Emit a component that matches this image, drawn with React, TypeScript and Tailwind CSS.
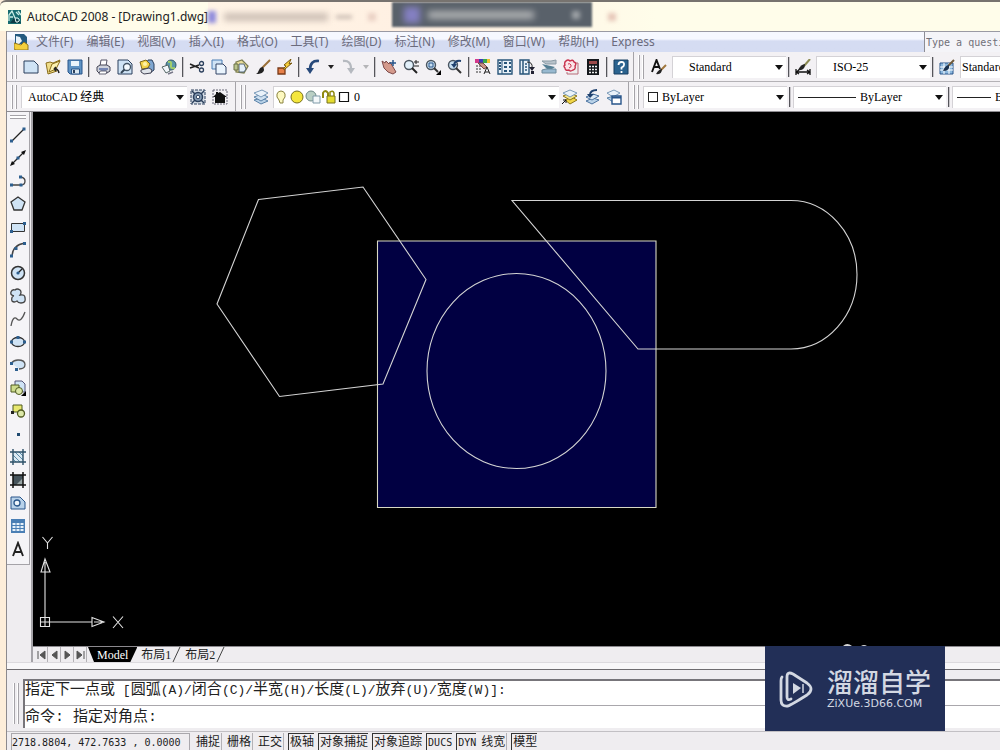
import { useState } from 'react';
import type { ReactNode } from 'react';

const ink = '#2b3f5c';
const blue = '#4a7fb5';
const pale = '#cfe3f5';

// 16x16 toolbar drawings
const icons: Record<string, ReactNode> = {
  new: <path d="M1 2h10l4 4v8H1z" fill={pale} stroke={ink} />,
  open: (
    <>
      <path d="M1 4l4-1 3 1 7-3-4 7 1 4-9 3z" fill="#f0dc88" stroke="#8a6d1a" />
      <path d="M4 13l3-8 8-3-4 8z" fill="#fbf0b0" stroke="#8a6d1a" />
      <path d="M14 14q-1-5-5-4m0 0l2-2m-2 2l2 2" fill="none" stroke="#222" strokeWidth="1.500" />
    </>
  ),
  save: (
    <>
      <path d="M1 1h14v14H3l-2-2z" fill="#5f93c4" stroke="#28558a" />
      <path d="M4 2h8v5H4z" fill="#eaf4fc" />
      <path d="M4.500 10h8v5h-8z" fill="#dbe8f2" stroke="#28558a" />
      <path d="M6 11h2v3H6z" fill={ink} />
    </>
  ),
  print: (
    <>
      <path d="M5 7l1-6h6l-1 6" fill="#fff" stroke="#556" />
      <path d="M2 8l3-2h7l3 2v4l-3 2H4l-2-2z" fill="#cfd3dc" stroke="#445" />
      <path d="M4 10h9M6 12h5" stroke="#5a6fa8" strokeWidth="1.500" />
      <path d="M5 12l-1 3h7l1-3z" fill="#fff" stroke="#667" />
    </>
  ),
  preview: (
    <>
      <path d="M1 1h10l4 4v10H1z" fill={pale} stroke={ink} />
      <circle cx="10" cy="8" r="3.500" fill="#f4faff" stroke="#456" strokeWidth="1.300" />
      <path d="M7.500 10.500L4 14" stroke="#345" strokeWidth="2" />
    </>
  ),
  publish: (
    <>
      <path d="M9 1h4l2 4v6l-4 3-5-4z" fill="#7fa6d0" stroke={ink} />
      <path d="M1 3l6-2 4 4-2 4-6 1z" fill="#f4d34a" stroke="#80671a" />
      <circle cx="6" cy="5" r="2" fill="#fff3a8" />
      <path d="M2 11l8-2 3 2-1 3-7 1-3-2z" fill="#e0e4ea" stroke="#445" />
    </>
  ),
  dwf: (
    <>
      <circle cx="10" cy="6" r="5" fill="#5c98a8" stroke="#31566a" />
      <path d="M7 3q4-1 3 3t4 3" fill="none" stroke="#a5d068" strokeWidth="2" />
      <path d="M1 8l6-2 2 6-4 2z" fill="#f2f6fa" stroke="#566" />
      <path d="M7 15l5-2" stroke="#778" strokeWidth="1.500" />
    </>
  ),
  cut: (
    <>
      <path d="M1 5l9 4M1 9l9-3" stroke="#222" strokeWidth="1.400" />
      <circle cx="12.500" cy="4.500" r="2" fill="none" stroke={ink} strokeWidth="1.300" />
      <circle cx="12.500" cy="11" r="2" fill="none" stroke={ink} strokeWidth="1.300" />
    </>
  ),
  copy: (
    <>
      <path d="M1 1h10v9H1z" fill={pale} stroke={blue} />
      <path d="M5 5h7l3 3v7H5z" fill="#eaf4fd" stroke="#346" />
    </>
  ),
  paste: (
    <>
      <path d="M3 3l6-2 6 6-4 7-8-1z" fill="#e9dd9a" stroke="#7a7d50" strokeWidth="1.300" />
      <path d="M6 5h5l2 5-2 3H6z" fill="#e4f0fa" stroke="#567" />
      <path d="M1 5h4v6H1z" fill="#b9c48c" stroke="#6a7146" />
    </>
  ),
  brush: (
    <>
      <path d="M15 1l-8 8" stroke="#9a7038" strokeWidth="2" />
      <path d="M8 8q-3 0-4 3t-3 4q5 0 7-2 2-2 0-5z" fill="#222" />
    </>
  ),
  painter: (
    <>
      <path d="M1 9h7v6H1z" fill="#e8814a" stroke="#7a3b18" strokeWidth="1.300" />
      <path d="M8 10l7-6-3 1 2-5-7 6 2 1-3 3z" fill="#f7cf3a" stroke="#7a5a10" />
    </>
  ),
  undo: (
    <>
      <path d="M14 2q-9-1-9 9" fill="none" stroke="#27497a" strokeWidth="2.600" />
      <path d="M1 9h8l-4 6z" fill="#27497a" />
    </>
  ),
  redo: (
    <>
      <path d="M3 2q8-1 8 8" fill="none" stroke="#b5b9bf" strokeWidth="2.300" />
      <path d="M7 9h8l-4 6z" fill="#b5b9bf" />
    </>
  ),
  pan: (
    <>
      <path d="M1 2l3 2 1-2 3 3 1-2 3 5 3 5-3 2-5-2-4-4z" fill="#d49a8c" stroke="#7d4a4a" />
      <path d="M12 1v6M9 4h6" stroke="#28558a" strokeWidth="1.500" />
    </>
  ),
  zoomrt: (
    <>
      <circle cx="6" cy="6" r="4.500" fill="#e2f0fa" stroke="#4a5560" strokeWidth="1.400" />
      <path d="M9 9l5 5" stroke="#222" strokeWidth="2" />
      <path d="M13 1v4M11 3h5M11 7h5" stroke="#222" />
    </>
  ),
  zoomwin: (
    <>
      <circle cx="6" cy="6" r="4.500" fill="#c8dff0" stroke="#4a5560" strokeWidth="1.400" />
      <path d="M4 4h4v4H4z" fill="none" stroke="#28558a" />
      <path d="M9 9l4 4" stroke="#333" strokeWidth="2" />
      <path d="M16 11v5h-5z" fill="#000" />
    </>
  ),
  zoomprev: (
    <>
      <circle cx="6" cy="6" r="4.500" fill="#c8dff0" stroke="#4a5560" strokeWidth="1.400" />
      <path d="M9 9l5 5" stroke="#333" strokeWidth="2" />
      <path d="M14 2q-6-1-7 4" fill="none" stroke="#1f416e" strokeWidth="2" />
      <path d="M4 5h6l-3 4z" fill="#1f416e" />
    </>
  ),
  props: (
    <>
      <path d="M0 0h4v4H0z" fill="#d43a8c" />
      <path d="M4 0h4v4H4z" fill="#3d3db8" />
      <path d="M8 0h4v4H8z" fill="#3aa84a" />
      <path d="M12 0h3v4h-3z" fill="#f0c030" />
      <path d="M1 7h6M1 10h5M1 13h6" stroke="#333" strokeDasharray="2 1" />
      <path d="M3 4l6 6 3-2-4-4z" fill="#c99082" stroke="#734444" />
      <path d="M9 15l3-7 3 7M10 13h4" fill="none" stroke="#222" />
    </>
  ),
  dcenter: (
    <>
      <path d="M1 1h14v14H1z" fill="#e8f1f8" stroke="#28557a" strokeWidth="1.400" />
      <path d="M5 1v14" stroke="#28557a" />
      <path d="M2 4h2M2 7h2M2 10h2M7 4h3M12 4h2M7 8h3M12 8h2M7 12h3M12 12h2" stroke="#28557a" strokeWidth="2" />
    </>
  ),
  palettes: (
    <>
      <path d="M1 1h9v14H1z" fill="#e8f1f8" stroke="#28557a" strokeWidth="1.400" />
      <path d="M4 1v14M6 5h2M6 8h2M6 11h2" stroke="#28557a" strokeWidth="1.500" />
      <path d="M8 3q6 0 5 6" fill="none" stroke="#222" />
      <path d="M10 8h6l-3 4zM12 12h3v3h-3z" fill="#223" />
    </>
  ),
  sheet: (
    <>
      <path d="M1 2h9l5-1v4H5z" fill="#b8c2ca" stroke="#8b9aa5" />
      <path d="M1 5l13 3-6 4z" fill="#557f94" />
      <path d="M1 11l4-1h10v4H1z" fill="#98b9d0" stroke="#6d8a9c" />
    </>
  ),
  markup: (
    <>
      <path d="M13 4h2v11H4v-2" fill="#eee" stroke="#b86a78" />
      <path d="M3 2q2-2 4 0 3-2 4 1 3 1 1 4 1 3-2 4-3 2-4 0-4 1-4-2-2-2 0-3-1-3 1-4z" fill="#fbe4e8" stroke="#c8324e" strokeWidth="1.400" />
      <path d="M5 5q2-1 3 1t-2 3" fill="none" stroke="#c8324e" />
    </>
  ),
  calc: (
    <>
      <path d="M2 0h12v16H2z" fill="#15181c" />
      <path d="M4 2h8v3H4z" fill="#9c4a4a" />
      <path d="M4 7.500h8M4 10.500h8M4 13.500h8" stroke="#eee" strokeWidth="1.600" strokeDasharray="2 1" />
    </>
  ),
  help: (
    <>
      <path d="M1 1h14v14H1z" fill="#2b638f" stroke="#183e60" />
      <path d="M5.500 6q0-3 3-3t2.500 3q0 1.500-2.500 2.500v2M8.500 12v2" fill="none" stroke="#fff" strokeWidth="1.800" />
    </>
  ),
  tstyle: (
    <>
      <path d="M1 13L5.500 1 9 10M3 8h5" fill="none" stroke="#111" strokeWidth="1.900" />
      <path d="M15 6l-5 5" stroke="#a0763c" strokeWidth="2" />
      <path d="M11 10q-3 0-6 5 6 1 6-5z" fill="#222" />
    </>
  ),
  dstyle: (
    <>
      <path d="M1 10v6M15 10v6M2 13h12M4 11l-3 2 3 2M12 11l3 2-3 2" fill="none" stroke="#111" strokeWidth="1.300" />
      <path d="M15 0l-6 7" stroke="#8b8a52" strokeWidth="2" />
      <path d="M10 5q-4 0-7 6 7 1 7-6z" fill="#222" />
    </>
  ),
  tbstyle: (
    <>
      <path d="M1 4h13v11H1z" fill="#8db8de" stroke="#28558a" />
      <path d="M1 8h13M1 11h13M5 4v11M10 4v11" stroke="#fff" />
      <path d="M15 1L9 7" stroke="#705a3a" strokeWidth="2" />
      <path d="M10 6q-4 0-6 6 7 0 6-6z" fill="#1d3350" />
    </>
  ),
  wsgear: (
    <>
      <path d="M1 1h14v14H1z" fill="#d5dde6" stroke={ink} strokeDasharray="3 1" />
      <circle cx="8" cy="8" r="4.500" fill="#8aa0b8" stroke={ink} strokeWidth="1.500" />
      <circle cx="8" cy="8" r="1.800" fill="#fff" stroke={ink} />
      <path d="M2 2l3 3M14 2l-3 3M2 14l3-3M14 14l-3-3" stroke={ink} strokeWidth="1.500" />
    </>
  ),
  home: (
    <>
      <path d="M1 1h14v14H1z" fill="none" stroke="#667" strokeDasharray="2 1" />
      <path d="M1 8l3-3V3h2v1l2-1 7 5h-2v6H3V8z" fill="#111" />
    </>
  ),
  layers: (
    <>
      <path d="M1 11l8-2 6 3-7 3z" fill="#b9d2e8" stroke="#5a82a8" />
      <path d="M1 8l8-3 6 3-7 4z" fill="#cfe0f0" stroke="#5a82a8" />
      <path d="M1 4l8-3 6 3-7 4z" fill="#eaf2fa" stroke="#7a9ab8" />
    </>
  ),
  layercur: (
    <>
      <path d="M3 11l7-3 5 3-7 4z" fill="#f2d648" stroke="#8a7518" />
      <path d="M1 7l7-3 7 3-7 4z" fill="#f6e58a" stroke="#8a7518" />
      <path d="M1 4l7-3 7 3-7 4z" fill="#eaf2fa" stroke="#7a9ab8" />
      <path d="M0 15l4-4M1 11h3v3" fill="none" stroke="#111" />
    </>
  ),
  layerprev: (
    <>
      <path d="M2 12l7-3 6 2-7 4z" fill="#b9d2e8" stroke="#4a72a0" />
      <path d="M2 8l7-3 6 2-7 4z" fill="#dbe8f4" stroke="#4a72a0" />
      <path d="M13 1q-7 0-7 5" fill="none" stroke="#1f416e" strokeWidth="2" />
      <path d="M3 5h7l-4 4z" fill="#1f416e" />
    </>
  ),
  layerstate: (
    <>
      <path d="M1 9l7-2 5 3-6 3z" fill="#b9d2e8" stroke="#5a82a8" />
      <path d="M1 4l7-3 6 3-7 4z" fill="#eaf2fa" stroke="#7a9ab8" />
      <path d="M6 7h9v8H6z" fill="#fff" stroke="#28558a" strokeWidth="1.400" />
      <path d="M6 8.500h9" stroke="#28558a" strokeWidth="2" />
    </>
  ),
  line: (
    <>
      <path d="M2 14L14 2" stroke="#222" strokeWidth="1.300" />
      <path d="M0 12.500h3v3H0zM12.500 0.500h3v3h-3z" fill="#2d5f8f" />
    </>
  ),
  xline: (
    <>
      <path d="M2 14L14 2" stroke="#222" strokeWidth="1.300" />
      <path d="M0 16l2-5 3 3zM16 0l-5 2 3 3z" fill="#111" />
      <path d="M6.500 6.500h3v3h-3z" fill="#2d5f8f" />
    </>
  ),
  pline: (
    <>
      <path d="M2 12h9q4 0 4-4 0-3-4-4" fill="none" stroke="#444" strokeWidth="1.300" />
      <path d="M0 10.500h3v3H0zM9.500 10.500h3v3h-3zM9 2.500h3v3H9z" fill="#2d5f8f" />
    </>
  ),
  polygon: <path d="M8 1l7 5-3 8H4L1 6z" fill={pale} stroke="#333" strokeWidth="1.300" />,
  rect: (
    <>
      <path d="M1.500 4.500h13v8h-13z" fill={pale} stroke="#333" />
      <path d="M0 11h3v3H0zM13 3h3v3h-3z" fill="#2d5f8f" />
    </>
  ),
  arc: (
    <>
      <path d="M2 15Q2 3 15 1" fill="none" stroke="#444" strokeWidth="1.300" />
      <path d="M0 12.500h3v3H0zM4.500 5h3v3h-3zM13 0h3v3h-3z" fill="#2d5f8f" />
    </>
  ),
  circle: (
    <>
      <circle cx="8" cy="8" r="6.500" fill={pale} stroke="#333" strokeWidth="1.500" />
      <path d="M8 8l4-4" stroke="#222" strokeWidth="1.300" />
      <circle cx="8" cy="8" r="1.600" fill="#2d5f8f" />
    </>
  ),
  cloud: (
    <path
      d="M4 8Q0 7 1 4q1-3 4-2 2-2 5 0 2 2 0 5 5-1 5 3 1 5-4 5-3 0-4-2-3 2-5 0-1-3 1-5"
      fill={pale}
      stroke="#444"
      strokeWidth="1.300"
    />
  ),
  spline: <path d="M1 15q2-11 6-7t8-7" fill="none" stroke="#555" strokeWidth="1.300" />,
  ellipse: (
    <>
      <ellipse cx="8" cy="8" rx="6.500" ry="4.500" fill={pale} stroke="#333" strokeWidth="1.300" />
      <path d="M0 6.500h3v3H0zM13 6.500h3v3h-3zM6.500 2h3v3h-3z" fill="#2d5f8f" />
    </>
  ),
  earc: (
    <>
      <path d="M1.500 6Q4 3 8 3q7 0 7 4.500T9 12" fill={pale} stroke="#555" strokeWidth="1.300" />
      <path d="M0 5h3v3H0zM5 11h3v3H5z" fill="#2d5f8f" />
    </>
  ),
  insert: (
    <>
      <path d="M5 1h7l3 3v8H5z" fill={pale} stroke="#557" />
      <path d="M1 5h8v7H1z" fill="#cddb8c" stroke="#4f5a20" />
      <circle cx="9" cy="11" r="3.500" fill="#dce8a8" stroke="#4f5a20" />
      <path d="M16 11v5h-5z" fill="#000" />
    </>
  ),
  block: (
    <>
      <path d="M3 2h9v7H3z" fill="#e8e870" stroke="#4f5a20" />
      <circle cx="11" cy="10.500" r="3.500" fill="#dce8a8" stroke="#4f5a20" strokeWidth="1.300" />
      <path d="M1 8h3v3H1z" fill="#222" />
    </>
  ),
  point: <path d="M7 7h3v3H7z" fill="#204a70" />,
  hatch: (
    <>
      <path d="M3 3h10v10H3z" fill="#dbe9f2" />
      <path d="M3 6l7 7M3 10l3 3M5 3l8 8M9 3l4 4" stroke="#5a8ca8" />
      <path d="M0 3h16M0 13h16M3 0v16M13 0v16" stroke="#2d5068" strokeWidth="1.400" />
    </>
  ),
  gradient: (
    <>
      <path d="M3 3h10v10H3z" fill="#46545c" />
      <path d="M6 13l7-7v7z" fill="#98a5a5" />
      <path d="M0 3h16M0 13h16M3 0v16M13 0v16" stroke="#111" strokeWidth="1.500" />
    </>
  ),
  region: (
    <>
      <path d="M1 2h9l5 5v7H1z" fill="#b8d2ea" stroke="#28558a" />
      <circle cx="7" cy="8" r="3" fill="#eef5fb" stroke="#28558a" strokeWidth="1.300" />
    </>
  ),
  table: (
    <>
      <path d="M1 1h14v14H1z" fill="#4a7fb5" />
      <path d="M2.500 5h3v2h-3zM6.500 5h3v2h-3zM10.500 5h3v2h-3zM2.500 8h3v2h-3zM6.500 8h3v2h-3zM10.500 8h3v2h-3zM2.500 11h3v2h-3zM6.500 11h3v2h-3zM10.500 11h3v2h-3z" fill="#e6f1fa" />
    </>
  ),
  mtext: <path d="M3 15L8 2l5 13M5 11h6" fill="none" stroke="#222" strokeWidth="1.900" />,
};

const menus = [
  '文件(F)', '编辑(E)', '视图(V)', '插入(I)', '格式(O)', '工具(T)',
  '绘图(D)', '标注(N)', '修改(M)', '窗口(W)', '帮助(H)', 'Express',
];

const standardTools = [
  'new', 'open', 'save', '|', 'print', 'preview', 'publish', 'dwf', '|',
  'cut', 'copy', 'paste', 'brush', 'painter', '|', 'undo', 'v', 'redo', 'w', '|',
  'pan', 'zoomrt', 'zoomwin', 'zoomprev', '|',
  'props', 'dcenter', 'palettes', 'sheet', 'markup', 'calc', '|', 'help',
];

const drawTools = [
  'line', 'xline', 'pline', 'polygon', 'rect', 'arc', 'circle', 'cloud', 'spline', 'ellipse',
  'earc', 'insert', 'block', 'point', 'hatch', 'gradient', 'region', 'table', 'mtext',
];

const modes = [
  { name: '捕捉', on: false },
  { name: '栅格', on: false },
  { name: '正交', on: false },
  { name: '极轴', on: true },
  { name: '对象捕捉', on: true },
  { name: '对象追踪', on: true },
  { name: 'DUCS', on: true },
  { name: 'DYN', on: true },
  { name: '线宽', on: false },
  { name: '模型', on: true },
];

const bitmapFont = "font-['Liberation_Serif','Noto_Sans_CJK_SC',serif] text-[12px]";

function Tool({ name, tall = false }: { name: string; tall?: boolean }) {
  return (
    <button
      aria-label={name}
      className={`flex w-[22px] shrink-0 items-center justify-center ${tall ? 'h-[23px]' : 'h-[22px]'}`}
    >
      <svg viewBox="0 0 16 16" className="h-4 w-4">
        {icons[name]}
      </svg>
    </button>
  );
}

function Sep() {
  return <div className="mx-[2px] h-5 w-[2px] shrink-0 border-l border-[#55555a] bg-[#c8c6ca]" />;
}

function Grip() {
  return (
    <div className="flex h-6 shrink-0 gap-[2px]">
      <div className="w-[2px] border-r border-[#a5a3a8] bg-white" />
      <div className="w-[2px] border-r border-[#a5a3a8] bg-white" />
    </div>
  );
}

function Combo({ label, value, className, pad = 'pl-2', children }: {
  label: string;
  value: string;
  className: string;
  pad?: string;
  children?: ReactNode;
}) {
  return (
    <label className={`relative flex h-[22px] shrink-0 items-center border-t border-l border-[#d4d2d6] bg-white ${className}`}>
      {children}
      <select aria-label={label} className={`h-full min-w-0 flex-1 appearance-none bg-transparent text-black ${pad} ${bitmapFont}`}>
        <option>{value}</option>
      </select>
      <svg viewBox="0 0 8 5" className="pointer-events-none absolute right-[3px] h-[5px] w-2">
        <path d="M0 0h8L4 5z" fill="#111" />
      </svg>
    </label>
  );
}

function Titlebar() {
  return (
    <header className="flex h-[31px] shrink-0 items-center overflow-hidden rounded-tl-md border-t-2 border-[#77736f] bg-[#fffdea] pl-[7px]">
      <svg viewBox="0 0 16 16" className="h-4 w-4 shrink-0">
        <path d="M1 1h13v14H1z" fill="#176b70" />
        <path d="M2 12V6l3-4 3 7M3 8h3M9 3l3 3M11 2l3 4" fill="none" stroke="#c8ece4" strokeWidth="1.300" />
        <path d="M3 14l4-5 3 1 4 4z" fill="#0c3a44" />
        <path d="M8 9h3q3 2 0 4H9z" fill="none" stroke="#e8f8f4" />
      </svg>
      <h1 className="ml-1 shrink-0 font-['Noto_Sans',sans-serif] text-[12px] whitespace-nowrap text-[#222]">
        AutoCAD 2008 - [Drawing1.dwg]
      </h1>
      <div className="flex h-full shrink-0 items-center bg-gradient-to-r from-[#fff4e6] via-[#fff0e2] to-[#fffdea]">
        <div className="h-3 w-2 bg-[#8f8bdc] blur-[2px]" />
        <div className="ml-2 h-2 w-[104px] bg-[#cdbfb5] blur-[3px]" />
        <div className="ml-2 h-1 w-4 bg-[#cdbfb5] blur-[2px]" />
        <div className="mx-4 h-2 w-2 bg-[#ead0c4] blur-[2px]" />
        <div className="flex h-[25px] w-[200px] items-center self-start bg-[#59616a] px-3 blur-[1px]">
          <div className="h-4 w-4 bg-[#8580c4] blur-[3px]" />
          <div className="ml-2 h-2 w-[106px] bg-[#aeb0b2] blur-[3px]" />
          <div className="ml-auto h-2 w-2 bg-[#a2a6aa] blur-[2px]" />
        </div>
        <div className="ml-4 h-2 w-2 bg-[#e6c6b8] blur-[2px]" />
        <div className="w-10" />
      </div>
    </header>
  );
}

function MenuBar() {
  return (
    <nav className="flex h-[21px] shrink-0 items-center border-t border-[#9a9aa4] bg-gradient-to-b from-[#f6f8ff] from-35% to-[#d5dcf2] to-45% pl-[7px]">
      <svg viewBox="0 0 16 16" className="h-4 w-4 shrink-0">
        <path d="M1 0h9l3 3v7H1z" fill="#245a80" />
        <path d="M2 2l4 1 2 4-4 4-2-2z" fill="#e8f2fa" />
        <path d="M0 15V9l7 2 3-3 4 3v5H2z" fill="#f4cf3c" stroke="#94781c" />
      </svg>
      <div className="ml-[6px] flex gap-[13px] font-['Noto_Sans','Noto_Sans_CJK_SC',sans-serif] text-[12px] whitespace-nowrap text-[#6b6b7c]">
        {menus.map((item) => (
          <button key={item}>{item}</button>
        ))}
      </div>
      <input
        aria-label="Type a question for help"
        placeholder="Type a question for help"
        className="ml-auto h-full w-[76px] border-l border-[#8c8c94] bg-[#f4f4f8] pl-px font-['DejaVu_Sans_Mono',monospace] text-[10px] placeholder:text-[#707078]"
      />
    </nav>
  );
}

function Toolbars() {
  return (
    <>
      <div className="flex h-[30px] shrink-0 items-center overflow-hidden border-b border-[#b4b2b6] bg-[#f3f1f4] pl-1">
        <Grip />
        <div className="ml-[3px] flex shrink-0 items-center">
          {standardTools.map((tool, i) => {
            if (tool === '|') return <Sep key={i} />;
            if (tool === 'v' || tool === 'w') {
              return (
                <button key={i} aria-label="history" className="flex h-5 w-[13px] items-center justify-center">
                  <svg viewBox="0 0 6 4" className="h-1 w-[6px]">
                    <path d="M0 0h6L3 4z" fill={tool === 'v' ? '#222' : '#b5b5b8'} />
                  </svg>
                </button>
              );
            }
            return <Tool key={i} name={tool} />;
          })}
        </div>
        <div className="mr-1 ml-px h-full w-px shrink-0 bg-[#a5a3a8]" />
        <Grip />
        <div className="ml-1 flex items-center">
          <Tool name="tstyle" />
          <Combo label="文字样式" value="Standard" className="ml-[2px] w-[114px]" pad="pl-4" />
          <Sep />
          <Tool name="dstyle" />
          <Combo label="标注样式" value="ISO-25" className="ml-[2px] w-[114px]" pad="pl-4" />
          <Sep />
          <Tool name="tbstyle" />
          <Combo label="表格样式" value="Standard" className="ml-[2px] w-[114px]" pad="pl-px" />
        </div>
      </div>

      <div className="flex h-[30px] shrink-0 items-center overflow-hidden border-b border-[#8f8d92] bg-[#f3f1f4] pl-1">
        <Grip />
        <Combo label="工作空间" value="AutoCAD 经典" className="ml-1 w-[166px]" pad="pl-[6px]" />
        <Tool name="wsgear" />
        <Tool name="home" />
        <div className="mr-1 ml-1 h-full w-px shrink-0 bg-[#a5a3a8]" />
        <Grip />
        <div className="ml-1 flex shrink-0 items-center">
          <Tool name="layers" />
          <Combo label="图层" value="0" className="ml-px w-[286px] pl-[2px]" pad="pl-1">
            <svg viewBox="0 0 74 16" className="h-4 w-[74px] shrink-0">
              <path d="M3 11q-3-3-2-6 1-3 4-3t4 3q1 3-2 6v3H4z" fill="#fdf9c0" stroke="#8a8340" />
              <circle cx="21" cy="8" r="6" fill="#f4e63c" stroke="#77701c" />
              <circle cx="35" cy="7" r="5" fill="#b9cfc4" stroke="#6e8a88" />
              <path d="M37 7h7v7h-7z" fill="#f4f8fa" stroke="#7f9aa8" />
              <path d="M47 9V4q2-4 5 0v3" fill="none" stroke="#8f8a10" strokeWidth="2" />
              <path d="M51 7h8v7h-8z" fill="#e4dc30" stroke="#77701c" />
              <path d="M54 7V3q3-2 4 1v3" fill="none" stroke="#8f8a10" strokeWidth="1.500" />
              <path d="M63.500 3.500h9v9h-9z" fill="#fff" stroke="#111" strokeWidth="1.200" />
            </svg>
          </Combo>
          <Tool name="layercur" />
          <Tool name="layerprev" />
          <Tool name="layerstate" />
        </div>
        <div className="mr-1 ml-[3px] h-full w-px shrink-0 bg-[#a5a3a8]" />
        <Grip />
        <div className="ml-1 flex items-center">
          <Combo label="颜色控制" value="ByLayer" className="w-[144px] pl-1" pad="pl-1">
            <span className="h-[10px] w-[10px] shrink-0 border border-[#222]" />
          </Combo>
          <Sep />
          <Combo label="线型控制" value="ByLayer" className="w-[153px] pl-1" pad="pl-1">
            <span className="h-px w-[58px] shrink-0 bg-[#222]" />
          </Combo>
          <Sep />
          <Combo label="线宽控制" value="ByLayer" className="w-[153px] pl-1" pad="pl-1">
            <span className="h-px w-[34px] shrink-0 bg-[#222]" />
          </Combo>
        </div>
      </div>
    </>
  );
}

function Drawing() {
  return (
    <svg viewBox="33 112 967 534" preserveAspectRatio="xMinYMin meet" className="block h-full w-full">
      <g fill="none" stroke="#d4d4d4" strokeWidth="1.100">
        <path d="M377.500 241h278.500v266.500H377.500z" fill="#010042" stroke="#d8d8c4" />
        <ellipse cx="516.500" cy="371" rx="89.500" ry="97.500" />
        <path d="M258.500 199.500L363 187l63 92.500L383 384l-103.500 12.500L217 304z" />
        <path d="M512 200.500h279c36 0 66 33 66 74s-30 74.500-66 74.500H638z" />
      </g>
      {/* UCS icon */}
      <g fill="none" stroke="#e4e4e4" strokeWidth="1.100">
        <path d="M40.500 617.500h9v9h-9zM45 627v-56M40.500 622H92" />
        <path d="M45 559l-4 13h9zM45 562v9" />
        <path d="M104 622l-12-4.500v9zM94 622h8" />
        <path d="M42.500 537l5 6 5-6M47.500 543v6M113 616.500l10 11.500M123 616.500L113 628" />
      </g>
      <path d="M843 646q4-4 9 0zM861 646q3-2 6 0z" fill="#d8d8d8" />
    </svg>
  );
}

function LayoutTabs() {
  const [tab, setTab] = useState('Model');
  const arrows = ['M2 1v8M9 1v8L4 5z', 'M8 1v8L3 5z', 'M3 1v8l5-4z', 'M2 1v8l5-4zM9 1v8'];

  return (
    <div className="flex h-4 shrink-0 items-stretch border-t border-[#8b898e] bg-[#efedf0]">
      <div className="ml-[2px] flex">
        {arrows.map((d, i) => (
          <button key={i} aria-label={`tab-nav-${i}`} className="flex w-[13px] items-center justify-center border-r border-[#b4b2b6]">
            <svg viewBox="0 0 11 10" className="h-[10px] w-[11px]">
              <path d={d} fill="#555" stroke="#555" />
            </svg>
          </button>
        ))}
      </div>
      <div role="tablist" className="ml-px flex items-stretch">
        <button
          role="tab"
          aria-selected={tab === 'Model'}
          onClick={() => setTab('Model')}
          className={`flex items-center bg-black px-[9px] text-white [clip-path:polygon(0_0,100%_0,calc(100%-7px)_100%,6px_100%)] ${bitmapFont}`}
        >
          Model
        </button>
        {['布局1', '布局2'].map((name) => (
          <button
            key={name}
            role="tab"
            aria-selected={tab === name}
            onClick={() => setTab(name)}
            className="flex items-center pl-1 font-['Liberation_Serif','Noto_Sans_CJK_SC',serif] text-[12px] text-[#222]"
          >
            {name}
            <svg viewBox="0 0 10 15" className="h-[15px] w-[10px]">
              <path d="M9 0L2 15" stroke="#444" fill="none" />
            </svg>
          </button>
        ))}
      </div>
    </div>
  );
}

function CommandWindow() {
  const history = '指定下一点或 [圆弧(A)/闭合(C)/半宽(H)/长度(L)/放弃(U)/宽度(W)]:';

  return (
    <section className="flex shrink-0 border-t border-[#6e6c70] bg-[#efedf0] pt-[9px] pl-[6px]">
      <div className="mr-1 flex py-1">
        <div className="flex gap-[2px]">
          <div className="w-[2px] border-r border-[#a5a3a8] bg-white" />
          <div className="w-[2px] border-r border-[#a5a3a8] bg-white" />
        </div>
      </div>
      <div className="min-w-0 flex-1 border-t-2 border-l-2 border-[#77757a] bg-white font-['Liberation_Mono','Noto_Sans_CJK_SC',monospace] text-[#222]">
        <p className="flex h-6 items-baseline overflow-hidden text-[15px] leading-5 whitespace-pre">
          {history.split(/([\x20-\x7e]+)/).map((part, i) => (
            <span key={i} className={i % 2 ? 'text-[13px]' : 'text-[15px]'}>
              {part}
            </span>
          ))}
        </p>
        <input
          aria-label="命令行"
          defaultValue="命令: 指定对角点:"
          className="block h-[23px] w-full border-t border-[#a9a7ac] pb-1 text-[15px] leading-[18px]"
        />
      </div>
    </section>
  );
}

function StatusBar() {
  return (
    <footer className="mt-[3px] flex h-[19px] shrink-0 items-stretch overflow-hidden border-t border-[#c2c0c4] bg-[#efedf0] pl-1 text-[12px] whitespace-nowrap text-[#1c1c1c]">
      <div className="mt-px flex w-[179px] items-center border border-b-0 border-[#a9a7ac] font-['DejaVu_Sans_Mono',monospace] text-[10px] whitespace-pre">
        2718.8804, 472.7633 , 0.0000
      </div>
      <div className="ml-[5px] flex gap-1 pt-px font-['Liberation_Serif','Noto_Sans_CJK_SC',serif]">
        {modes.map((mode) => (
          <button
            key={mode.name}
            aria-pressed={mode.on}
            className={
              mode.on
                ? 'flex items-center border-t border-l border-[#333] pl-px'
                : 'flex items-center border-r border-[#b4b2b6] px-px'
            }
          >
            <span className={/^[A-Z]/.test(mode.name) ? "font-['DejaVu_Sans_Mono',monospace] text-[10px]" : ''}>
              {mode.name}
            </span>
          </button>
        ))}
      </div>
    </footer>
  );
}

function Watermark() {
  return (
    <aside className="absolute right-[55px] bottom-[19px] flex h-[85px] w-[180px] items-center bg-[#222f57] pl-[14px] text-[#d3d8e2]">
      <svg viewBox="0 0 36 38" className="h-[38px] w-9 shrink-0">
        <g fill="none" stroke="#d3d8e2" strokeWidth="2.800" strokeLinejoin="round" strokeLinecap="round">
          <path d="M3 7q-1 1-1 4v19q0 7 7 6 3-1 19-11 8-6 0-12L14 4Q8 1 8 7v20q0 4 4 2" />
        </g>
        <path d="M14 13l8 5-8 6z" fill="#d3d8e2" />
        <path d="M24 14v9" stroke="#d3d8e2" strokeWidth="1.500" />
      </svg>
      <div className="ml-3 whitespace-nowrap">
        <p className="font-['Noto_Sans_CJK_SC',sans-serif] text-[26px] leading-[26px] font-medium">溜溜自学</p>
        <p className="mt-1 font-['DejaVu_Sans',sans-serif] text-[11px] leading-[11px]">ZiXUe.3D66.COM</p>
      </div>
    </aside>
  );
}

export default function App() {
  return (
    <div className="relative flex h-screen flex-col overflow-hidden bg-[#fdeeda]">
      <Titlebar />
      <div className="ml-[6px] flex min-h-0 flex-1 flex-col border-l border-[#8c8a8e] bg-[#efedf0]">
        <MenuBar />
        <Toolbars />
        <main className="flex min-h-0 flex-1">
          <div className="flex w-[26px] shrink-0 flex-col items-start border-r-2 border-[#a5a3a8]">
            <div className="flex flex-col border-r border-b border-[#a5a3a8] bg-[#f5f4f7] pb-1">
              <div className="mx-[3px] mt-[3px] mb-1 h-1 border-y border-[#a5a3a8] bg-white" />
              {drawTools.map((tool) => (
                <Tool key={tool} name={tool} tall />
              ))}
            </div>
          </div>
          <div className="flex min-w-0 flex-1 flex-col">
            <div className="min-h-0 flex-1 bg-black">
              <Drawing />
            </div>
            <LayoutTabs />
          </div>
        </main>
        <div className="h-[7px] shrink-0 border-t border-[#dcdade] bg-[#f8f7f9]" />
        <CommandWindow />
        <StatusBar />
      </div>
      <Watermark />
    </div>
  );
}
